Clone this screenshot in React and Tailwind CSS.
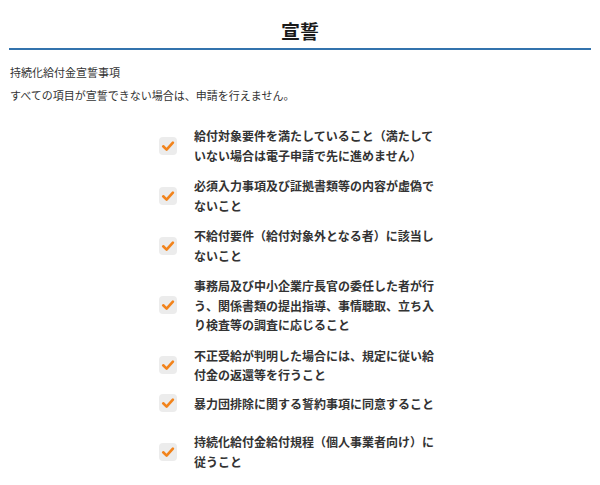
import React from "react";

const items = [
  ["給付対象要件を満たしていること（満たして", "いない場合は電子申請で先に進めません）"],
  ["必須入力事項及び証拠書類等の内容が虚偽で", "ないこと"],
  ["不給付要件（給付対象外となる者）に該当し", "ないこと"],
  [
    "事務局及び中小企業庁長官の委任した者が行",
    "う、関係書類の提出指導、事情聴取、立ち入",
    "り検査等の調査に応じること",
  ],
  ["不正受給が判明した場合には、規定に従い給", "付金の返還等を行うこと"],
  ["暴力団排除に関する誓約事項に同意すること"],
  ["持続化給付金給付規程（個人事業者向け）に", "従うこと"],
];

function Check() {
  return (
    <div className="w-[18px] h-[18px] rounded-[4px] bg-[#ececec] flex items-center justify-center shrink-0">
      <svg width="18" height="18" viewBox="0 0 18 18">
        <path
          d="M4.2 9.3 L7.6 12.6 L13.9 5.6"
          fill="none"
          stroke="#f2831b"
          strokeWidth="2.6"
          strokeLinecap="round"
          strokeLinejoin="round"
        />
      </svg>
    </div>
  );
}

export default function App() {
  return (
    <div
      className="w-[600px] h-[485px] bg-white text-[#333] overflow-hidden"
      style={{ fontFamily: '"Noto Sans CJK JP", "Noto Sans", sans-serif' }}
    >
      <div className="mx-[9px] pt-[19px] pb-[5px] border-b-2 border-[#3373ad] text-center">
        <h1 className="text-[19px] leading-[24px] font-bold text-[#1a1a1a]">宣誓</h1>
      </div>
      <div className="px-[10px] mt-[11px] text-[11px] leading-[23px] text-[#333]">
        <p>持続化給付金宣誓事項</p>
        <p>すべての項目が宣誓できない場合は、申請を行えません。</p>
      </div>
      <div className="mt-[19px] mx-auto w-[282px] flex flex-col gap-[11px]">
        {items.map((lines, i) => (
          <div
            key={i}
            className={`flex items-center gap-[17px] ${i === 5 ? "-mt-[2px] pb-[8px]" : ""}`}
          >
            <Check />
            <div className="w-[247px] text-[12px] leading-[19.5px] font-bold text-[#333] whitespace-nowrap">
              {lines.map((l, j) => (
                <div key={j}>{l}</div>
              ))}
            </div>
          </div>
        ))}
      </div>
    </div>
  );
}
